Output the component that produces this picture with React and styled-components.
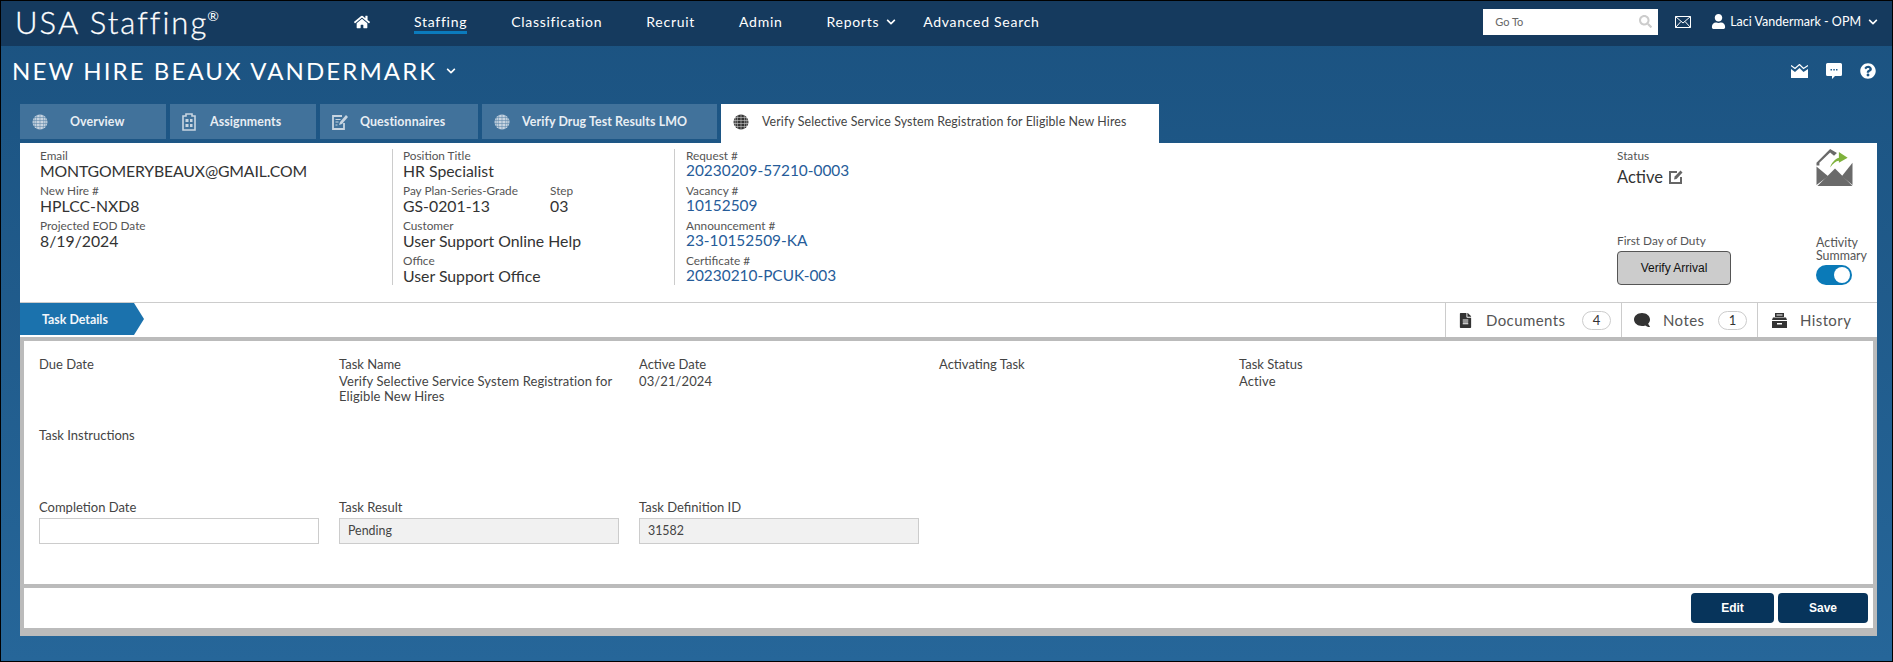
import React from 'react';
import styled, {createGlobalStyle} from 'styled-components';
import {FaHome, FaChevronDown, FaSearch, FaUser, FaQuestionCircle, FaFileAlt, FaComment} from 'react-icons/fa';

const GlobalStyle = createGlobalStyle`
	html, body {
		margin: 0;
		padding: 0;
		background: #000;
	}
	* {
		box-sizing: border-box;
	}
	body {
		font-family: Lato, "Noto Sans", sans-serif;
		color: #333;
	}
`;

const Frame = styled.div`
	width: 1893px;
	height: 662px;
	border: 1px solid #000;
	overflow: hidden;
	display: flex;
	flex-direction: column;
	background: linear-gradient(#1b5280, #266699);
`;

const TopBar = styled.header`
	height: 45px;
	flex: none;
	display: flex;
	align-items: center;
	padding: 0 14px 4px 14px;
	background: #153a5e;
	color: #fff;
`;
const Logo = styled.div`
	width: 339px;
	font-size: 31px;
	font-weight: 300;
	letter-spacing: 2.05px;
	white-space: nowrap;
	-webkit-text-stroke: 0.3px #fff;
	sup {
		font-size: 14px;
		font-weight: 400;
		vertical-align: 13px;
		line-height: 0;
		letter-spacing: 0;
		margin-left: -1px;
		-webkit-text-stroke: 0;
	}
`;
const Nav = styled.nav`
	display: flex;
	align-items: center;
	gap: 44px;
	flex: 1;
`;
const NavItem = styled.a`
	position: relative;
	display: flex;
	align-items: center;
	gap: 7px;
	font-size: 14px;
	letter-spacing: 0.72px;
	white-space: nowrap;
	color: #fff;
	margin-left: ${props => props.$pull ? '-17px' : '0'};
	${props => props.$active && `
		&::after {
			content: '';
			position: absolute;
			left: 0;
			right: 0;
			bottom: -4px;
			height: 3px;
			background: #0b7bbd;
		}
	`}
`;
const GoTo = styled.div`
	width: 175px;
	height: 26px;
	display: flex;
	align-items: center;
	justify-content: space-between;
	padding: 0 6px 0 12px;
	background: #fff;
	color: #666;
	font-size: 11px;
	margin-right: 17px;
`;
const UserMenu = styled.div`
	display: flex;
	align-items: center;
	gap: 4px;
	margin-left: 20px;
	font-size: 12.5px;
	white-space: nowrap;
`;

const TitleRow = styled.div`
	height: 58px;
	flex: none;
	display: flex;
	align-items: center;
	justify-content: space-between;
	padding: 0 16px 9px 11px;
	color: #fff;
`;
const Title = styled.h1`
	margin: 0;
	display: flex;
	align-items: center;
	gap: 9px;
	font-size: 24px;
	font-weight: 400;
	letter-spacing: 2.1px;
	white-space: nowrap;
`;
const TitleTools = styled.div`
	display: flex;
	align-items: center;
	gap: 18px;
`;

const TabStrip = styled.div`
	height: 39px;
	flex: none;
	display: flex;
	gap: 4px;
	margin-left: 19px;
`;
const Tab = styled.div`
	width: ${props => props.$width}px;
	height: ${props => props.$active ? 39 : 35}px;
	display: flex;
	align-items: center;
	gap: ${props => props.$gap}px;
	padding-left: 12px;
	padding-bottom: ${props => props.$active ? 4 : 0}px;
	font-size: 12.4px;
	letter-spacing: 0.1px;
	white-space: nowrap;
	background: ${props => props.$active ? '#fff' : '#41729b'};
	color: ${props => props.$active ? '#444' : '#e8eef4'};
	font-weight: ${props => props.$active ? 400 : 700};
`;

const Panel = styled.main`
	width: 1857px;
	margin-left: 19px;
	background: #fff;
`;
const InfoPanel = styled.section`
	height: 160px;
	display: flex;
	padding: 6px 0 0 20px;
	border-bottom: 1px solid #ccc;
`;
const InfoColumn = styled.div`
	width: ${props => props.$width}px;
	height: 136px;
	flex: none;
	${props => props.$rule && `
		border-left: 1px solid #ccc;
		padding-left: ${props.$rule}px;
	`}
`;
const FieldRow = styled.div`
	display: flex;
	gap: ${props => props.$gap || 0}px;
`;
const Field = styled.div`
	height: 35px;
	width: ${props => props.$width ? `${props.$width}px` : 'auto'};
`;
const FieldLabel = styled.div`
	font-size: 11.8px;
	line-height: 14px;
	color: #555;
	white-space: nowrap;
`;
const FieldValue = styled.div`
	margin-top: -2px;
	font-size: ${props => props.$link ? '15.4px' : '15.8px'};
	line-height: 19px;
	letter-spacing: ${props => props.$upper ? '-0.15px' : '0'};
	white-space: nowrap;
	color: ${props => props.$link ? '#265c99' : '#333'};
`;
const StatusColumn = styled.div`
	width: 199px;
	height: 136px;
	flex: none;
	margin-left: 742px;
	display: flex;
	flex-direction: column;
	justify-content: space-between;
`;
const StatusValue = styled.div`
	display: flex;
	align-items: center;
	gap: 6px;
	margin-top: 3px;
	font-size: 16.5px;
	line-height: 22px;
`;
const VerifyButton = styled.button`
	display: block;
	width: 114px;
	height: 34px;
	margin-top: 3px;
	border: 1px solid #555;
	border-radius: 4px;
	background: #ccc;
	color: #111;
	font: 12px "Liberation Sans", Arial, sans-serif;
`;
const SummaryColumn = styled.div`
	width: 40px;
	height: 136px;
	flex: none;
	display: flex;
	flex-direction: column;
	justify-content: space-between;
	font-size: 12.4px;
	line-height: 13px;
	color: #555;
	white-space: nowrap;
`;
const Toggle = styled.div`
	width: 36px;
	height: 20px;
	margin-top: 3px;
	padding: 2px 2px 2px 18px;
	border-radius: 10px;
	background: #0a7ab8;
	&::before {
		content: '';
		display: block;
		width: 16px;
		height: 16px;
		border-radius: 50%;
		background: #fff;
	}
`;

const SubBar = styled.div`
	height: 34px;
	display: flex;
	justify-content: space-between;
`;
const ActiveSection = styled.div`
	width: 124px;
	height: 32px;
	display: flex;
	align-items: center;
	padding-left: 22px;
	font-size: 12.4px;
	font-weight: 700;
	color: #f2f6fa;
	background: #1b72ad;
	clip-path: polygon(0 0, 114px 0, 100% 50%, 114px 100%, 0 100%);
`;
const SideTabs = styled.div`
	display: flex;
`;
const SideTab = styled.div`
	width: ${props => props.$width}px;
	display: flex;
	align-items: center;
	padding-left: ${props => props.$pad}px;
	border-left: 1px solid #ccc;
	font-size: 15px;
	letter-spacing: 0.4px;
	color: #555;
	svg {
		flex: none;
		margin-right: 13px;
		color: #333;
	}
`;
const Count = styled.span`
	width: 29px;
	height: 19px;
	margin-left: auto;
	margin-right: 10px;
	border: 1px solid #ccc;
	border-radius: 10px;
	text-align: center;
	font-size: 13px;
	line-height: 17px;
	letter-spacing: 0;
	color: #333;
`;

const TaskFrame = styled.section`
	border: 4px solid #bbb;
	border-bottom-width: 8px;
`;
const TaskBody = styled.div`
	height: 247px;
	display: grid;
	grid-template-columns: repeat(5, 280px);
	grid-template-rows: 71px 72px auto;
	column-gap: 20px;
	padding: 16px 0 0 15px;
	border-bottom: 4px solid #bbb;
`;
const TaskField = styled.div`
	grid-column: ${props => props.$span || 'auto'};
`;
const TaskLabel = styled.div`
	font-size: 13px;
	line-height: 14px;
	color: #444;
`;
const TaskValue = styled.div`
	margin-top: 3px;
	font-size: 13px;
	line-height: 14.5px;
	letter-spacing: 0.1px;
	color: #444;
`;
const TextBox = styled.div`
	height: 26px;
	margin-top: 4px;
	padding-left: 8px;
	border: 1px solid #ccc;
	background: ${props => props.$readOnly ? '#f1f1f1' : '#fff'};
	font-size: 12.4px;
	line-height: 24px;
	color: #444;
`;
const ActionBar = styled.div`
	height: 40px;
	display: flex;
	justify-content: flex-end;
	align-items: flex-start;
	gap: 4px;
	padding: 5px 5px 0 0;
`;
const ActionButton = styled.button`
	width: ${props => props.$width}px;
	height: 30px;
	border: 0;
	border-radius: 4px;
	background: #07345b;
	color: #fff;
	font: bold 12px "Liberation Sans", Arial, sans-serif;
`;

const Globe = ({color}) => (
	<svg width="16" height="16" viewBox="0 0 16 16" fill="none" style={{flex: 'none'}}>
		<circle cx="8" cy="8" r="7.500" fill={color} />
		<g stroke={color === '#333' ? '#fff' : '#41729b'} strokeWidth="0.6" opacity="0.75">
			<path d="M0.500 3.500h15M0.500 6.500h15M0.500 9.500h15M0.500 12.500h15" />
			<path d="M8 0.500v15M5 1c-1 4-1 10 0 14M11 1c1 4 1 10 0 14M2.500 3c-.5 3-.5 7 0 10M13.500 3c.5 3 .5 7 0 10" />
		</g>
	</svg>
);

const ClipboardIcon = () => (
	<svg width="14" height="18" viewBox="0 0 14 18" style={{flex: 'none'}}>
		<path d="M1 3h3V1h6v2h3v14H1z" fill="none" stroke="#c8d5e1" strokeWidth="1.6" />
		<path d="M3.500 6h3v3h-3zM8 6h2.500v3H8zM3.500 11h3v3h-3zM8 11h2.500v3H8z" fill="#c8d5e1" />
	</svg>
);

const QuestionIcon = () => (
	<svg width="16" height="16" viewBox="0 0 16 16" fill="none" style={{flex: 'none'}}>
		<path d="M12 9v6H1V2h9" stroke="#c8d5e1" strokeWidth="1.800" />
		<path d="M3.500 5.500h5M3.500 8h3M3.500 11h2" stroke="#c8d5e1" strokeWidth="1.200" />
		<path d="M7 11l1-3 6-7 2 2-6 7z" fill="#c8d5e1" />
	</svg>
);

const MailIcon = () => (
	<svg width="16" height="12" viewBox="0 0 16 12" fill="none" style={{flex: 'none'}}>
		<path d="M.5.5h15v11H.5zM.5.5L8 7l7.500-6.500M.5 11.500l5.500-6M15.500 11.500l-5.500-6" stroke="#fff" />
	</svg>
);

const CrownIcon = () => (
	<svg width="17" height="14" viewBox="0 0 17 14">
		<path d="M0 5l4 3 4.500-4 4 4L17 5v9H0z" fill="#fff" />
		<path d="M0 1.500l4 3 4.500-4 4 4L17 1.500" fill="none" stroke="#fff" strokeWidth="1.200" />
	</svg>
);

const BubbleIcon = () => (
	<svg width="16" height="16" viewBox="0 0 16 16">
		<path d="M1.500 0h13A1.500 1.500 0 0116 1.500v10a1.500 1.500 0 01-1.500 1.500H9l-3 3v-3H1.500A1.500 1.500 0 010 11.500v-10A1.500 1.500 0 011.500 0z" fill="#fff" />
		<path d="M4.500 6h1.500v1.500H4.500zM7.300 6h1.500v1.500H7.300zM10 6h1.500v1.500H10z" fill="#1f5b8a" />
	</svg>
);

const EditIcon = () => (
	<svg width="14" height="14" viewBox="0 0 14 14" fill="none">
		<path d="M8 2H1v11h11V7" stroke="#666" strokeWidth="2" />
		<path d="M5 9.500l.7-3L11.500.5l2 2L7.500 9z" fill="#666" />
	</svg>
);

const SendMailIcon = () => (
	<svg width="37" height="37" viewBox="0 0 37 38" style={{flex: 'none'}}>
		<path d="M0 14L14 0l7 4-3 3-4-3.500L3 14v3H0z" fill="#6a6a6a" />
		<path d="M0 18l12 10L0 37z" fill="#6a6a6a" />
		<path d="M19 20l18 18H1z" fill="#6a6a6a" />
		<path d="M37 14v23l-11-9z" fill="#6a6a6a" />
		<path d="M14 19c2-7 8-10 9-10V3l9 6-9 5v-2c-3 0-6 3-9 7z" fill="#7fb23c" />
	</svg>
);

const HistoryIcon = () => (
	<svg width="15" height="15" viewBox="0 0 15 15">
		<path d="M3 0h9v4H3zM4.500 1.500v1h6v-1z" fill="#333" fillRule="evenodd" />
		<path d="M1 4.500h13l1 2.500H0z" fill="#333" />
		<path d="M0 8h15v7H0zM5 10v1.500h5V10z" fill="#333" fillRule="evenodd" />
	</svg>
);

const infoLeft = [
	{label: 'Email', value: 'MONTGOMERYBEAUX@GMAIL.COM', upper: true},
	{label: 'New Hire #', value: 'HPLCC-NXD8'},
	{label: 'Projected EOD Date', value: '8/19/2024'},
];
const infoLinks = [
	{label: 'Request #', value: '20230209-57210-0003'},
	{label: 'Vacancy #', value: '10152509'},
	{label: 'Announcement #', value: '23-10152509-KA'},
	{label: 'Certificate #', value: '20230210-PCUK-003'},
];
const navItems = ['Classification', 'Recruit', 'Admin'];

const App = () => (
	<Frame>
		<GlobalStyle />
		<TopBar>
			<Logo>USA Staffing<sup>®</sup></Logo>
			<Nav>
				<FaHome size={16} />
				<NavItem $active>Staffing</NavItem>
				{navItems.map(item => <NavItem key={item}>{item}</NavItem>)}
				<NavItem>Reports <FaChevronDown size={10} /></NavItem>
				<NavItem $pull>Advanced Search</NavItem>
			</Nav>
			<GoTo>Go To <FaSearch size={13} color="#ccc" /></GoTo>
			<MailIcon />
			<UserMenu>
				<FaUser size={15} />
				Laci Vandermark - OPM
				<FaChevronDown size={10} style={{marginLeft: 3}} />
			</UserMenu>
		</TopBar>
		<TitleRow>
			<Title>NEW HIRE BEAUX VANDERMARK <FaChevronDown size={10} /></Title>
			<TitleTools>
				<CrownIcon />
				<BubbleIcon />
				<FaQuestionCircle size={16} />
			</TitleTools>
		</TitleRow>
		<TabStrip>
			<Tab $width={146} $gap={22}><Globe color="#c8d5e1" />Overview</Tab>
			<Tab $width={146} $gap={14}><ClipboardIcon />Assignments</Tab>
			<Tab $width={158} $gap={12}><QuestionIcon />Questionnaires</Tab>
			<Tab $width={235} $gap={12}><Globe color="#c8d5e1" />Verify Drug Test Results LMO</Tab>
			<Tab $width={438} $gap={13} $active><Globe color="#333" />Verify Selective Service System Registration for Eligible New Hires</Tab>
		</TabStrip>
		<Panel>
			<InfoPanel>
				<InfoColumn $width={352}>
					{infoLeft.map(field => (
						<Field key={field.label}>
							<FieldLabel>{field.label}</FieldLabel>
							<FieldValue $upper={field.upper}>{field.value}</FieldValue>
						</Field>
					))}
				</InfoColumn>
				<InfoColumn $width={282} $rule={10}>
					<Field>
						<FieldLabel>Position Title</FieldLabel>
						<FieldValue>HR Specialist</FieldValue>
					</Field>
					<FieldRow $gap={36}>
						<Field $width={111}>
							<FieldLabel>Pay Plan-Series-Grade</FieldLabel>
							<FieldValue>GS-0201-13</FieldValue>
						</Field>
						<Field>
							<FieldLabel>Step</FieldLabel>
							<FieldValue>03</FieldValue>
						</Field>
					</FieldRow>
					<Field>
						<FieldLabel>Customer</FieldLabel>
						<FieldValue>User Support Online Help</FieldValue>
					</Field>
					<Field>
						<FieldLabel>Office</FieldLabel>
						<FieldValue>User Support Office</FieldValue>
					</Field>
				</InfoColumn>
				<InfoColumn $width={201} $rule={11}>
					{infoLinks.map(field => (
						<Field key={field.label}>
							<FieldLabel>{field.label}</FieldLabel>
							<FieldValue $link>{field.value}</FieldValue>
						</Field>
					))}
				</InfoColumn>
				<StatusColumn>
					<div>
						<FieldLabel>Status</FieldLabel>
						<StatusValue>Active <EditIcon /></StatusValue>
					</div>
					<div>
						<FieldLabel>First Day of Duty</FieldLabel>
						<VerifyButton>Verify Arrival</VerifyButton>
					</div>
				</StatusColumn>
				<SummaryColumn>
					<SendMailIcon />
					<div>
						Activity<br />Summary
						<Toggle />
					</div>
				</SummaryColumn>
			</InfoPanel>
			<SubBar>
				<ActiveSection>Task Details</ActiveSection>
				<SideTabs>
					<SideTab $width={176} $pad={12}><FaFileAlt size={15} />Documents<Count>4</Count></SideTab>
					<SideTab $width={136} $pad={12}><FaComment size={16} style={{transform: 'scaleX(-1)'}} />Notes<Count>1</Count></SideTab>
					<SideTab $width={120} $pad={14}><HistoryIcon />History</SideTab>
				</SideTabs>
			</SubBar>
			<TaskFrame>
				<TaskBody>
					<TaskField><TaskLabel>Due Date</TaskLabel></TaskField>
					<TaskField>
						<TaskLabel>Task Name</TaskLabel>
						<TaskValue>Verify Selective Service System Registration for Eligible New Hires</TaskValue>
					</TaskField>
					<TaskField>
						<TaskLabel>Active Date</TaskLabel>
						<TaskValue>03/21/2024</TaskValue>
					</TaskField>
					<TaskField><TaskLabel>Activating Task</TaskLabel></TaskField>
					<TaskField>
						<TaskLabel>Task Status</TaskLabel>
						<TaskValue>Active</TaskValue>
					</TaskField>
					<TaskField $span="1 / -1"><TaskLabel>Task Instructions</TaskLabel></TaskField>
					<TaskField>
						<TaskLabel>Completion Date</TaskLabel>
						<TextBox />
					</TaskField>
					<TaskField>
						<TaskLabel>Task Result</TaskLabel>
						<TextBox $readOnly>Pending</TextBox>
					</TaskField>
					<TaskField>
						<TaskLabel>Task Definition ID</TaskLabel>
						<TextBox $readOnly>31582</TextBox>
					</TaskField>
				</TaskBody>
				<ActionBar>
					<ActionButton $width={83}>Edit</ActionButton>
					<ActionButton $width={90}>Save</ActionButton>
				</ActionBar>
			</TaskFrame>
		</Panel>
	</Frame>
);

export default App;
